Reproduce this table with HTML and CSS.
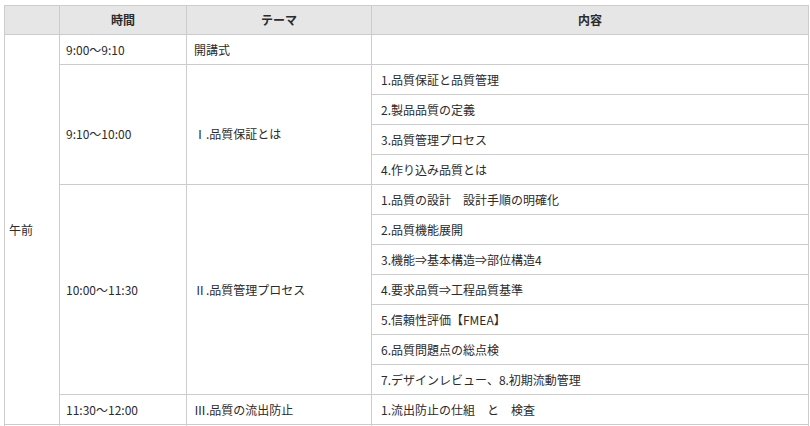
FILE: index.html
```html
<!DOCTYPE html>
<html lang="ja">
<head>
<meta charset="utf-8">
<title>スケジュール</title>
<link rel="stylesheet" href="styles.css">
</head>
<body>
<table class="schedule">
  <colgroup>
    <col class="c-part">
    <col class="c-time">
    <col class="c-theme">
    <col class="c-content">
  </colgroup>
  <thead>
    <tr>
      <th></th>
      <th>時間</th>
      <th>テーマ</th>
      <th>内容</th>
    </tr>
  </thead>
  <tbody>
    <tr>
      <td class="part" rowspan="13">午前</td>
      <td class="time">9:00～9:10</td>
      <td class="theme">開講式</td>
      <td class="content"></td>
    </tr>
    <tr>
      <td class="time low" rowspan="4">9:10～10:00</td>
      <td class="theme low" rowspan="4">Ⅰ.品質保証とは</td>
      <td class="content">1.品質保証と品質管理</td>
    </tr>
    <tr><td class="content">2.製品品質の定義</td></tr>
    <tr><td class="content">3.品質管理プロセス</td></tr>
    <tr><td class="content">4.作り込み品質とは</td></tr>
    <tr>
      <td class="time" rowspan="7">10:00～11:30</td>
      <td class="theme" rowspan="7">Ⅱ.品質管理プロセス</td>
      <td class="content">1.品質の設計　設計手順の明確化</td>
    </tr>
    <tr><td class="content">2.品質機能展開</td></tr>
    <tr><td class="content">3.機能⇒基本構造⇒部位構造4</td></tr>
    <tr><td class="content">4.要求品質⇒工程品質基準</td></tr>
    <tr><td class="content">5.信頼性評価【FMEA】</td></tr>
    <tr><td class="content">6.品質問題点の総点検</td></tr>
    <tr><td class="content">7.デザインレビュー、8.初期流動管理</td></tr>
    <tr>
      <td class="time">11:30～12:00</td>
      <td class="theme">Ⅲ.品質の流出防止</td>
      <td class="content">1.流出防止の仕組　と　検査</td>
    </tr>
    <tr>
      <td class="part"></td>
      <td class="time"></td>
      <td class="theme"></td>
      <td class="content"></td>
    </tr>
  </tbody>
</table>
</body>
</html>
```
FILE: styles.css
```css
html, body {
  margin: 0;
  padding: 0;
  background: #ffffff;
}

body {
  font-family: "Noto Sans CJK JP", "Noto Sans", sans-serif;
  font-size: 12px;
  color: #2b2b2b;
}

.schedule {
  border-collapse: collapse;
  table-layout: fixed;
  width: 804px;
  margin: 5px 0 0 4px;
}

.c-part { width: 55px; }
.c-time { width: 127px; }
.c-theme { width: 185px; }
.c-content { width: 437px; }

.schedule th,
.schedule td {
  border: 1px solid #cccccc;
  line-height: 18px;
  vertical-align: middle;
  white-space: nowrap;
}

.schedule th {
  background: #e6e6e6;
  font-weight: bold;
  text-align: center;
  height: 28px;
  padding: 0;
}

.schedule td {
  height: 29px;
  padding: 0;
  text-align: left;
}

.schedule td.part { padding-left: 4px; }
.schedule td.time { padding-left: 6px; }
.schedule td.theme { padding-left: 7px; }
.schedule td.content { padding-left: 9px; }

.schedule td.low { padding-top: 18px; }
```
